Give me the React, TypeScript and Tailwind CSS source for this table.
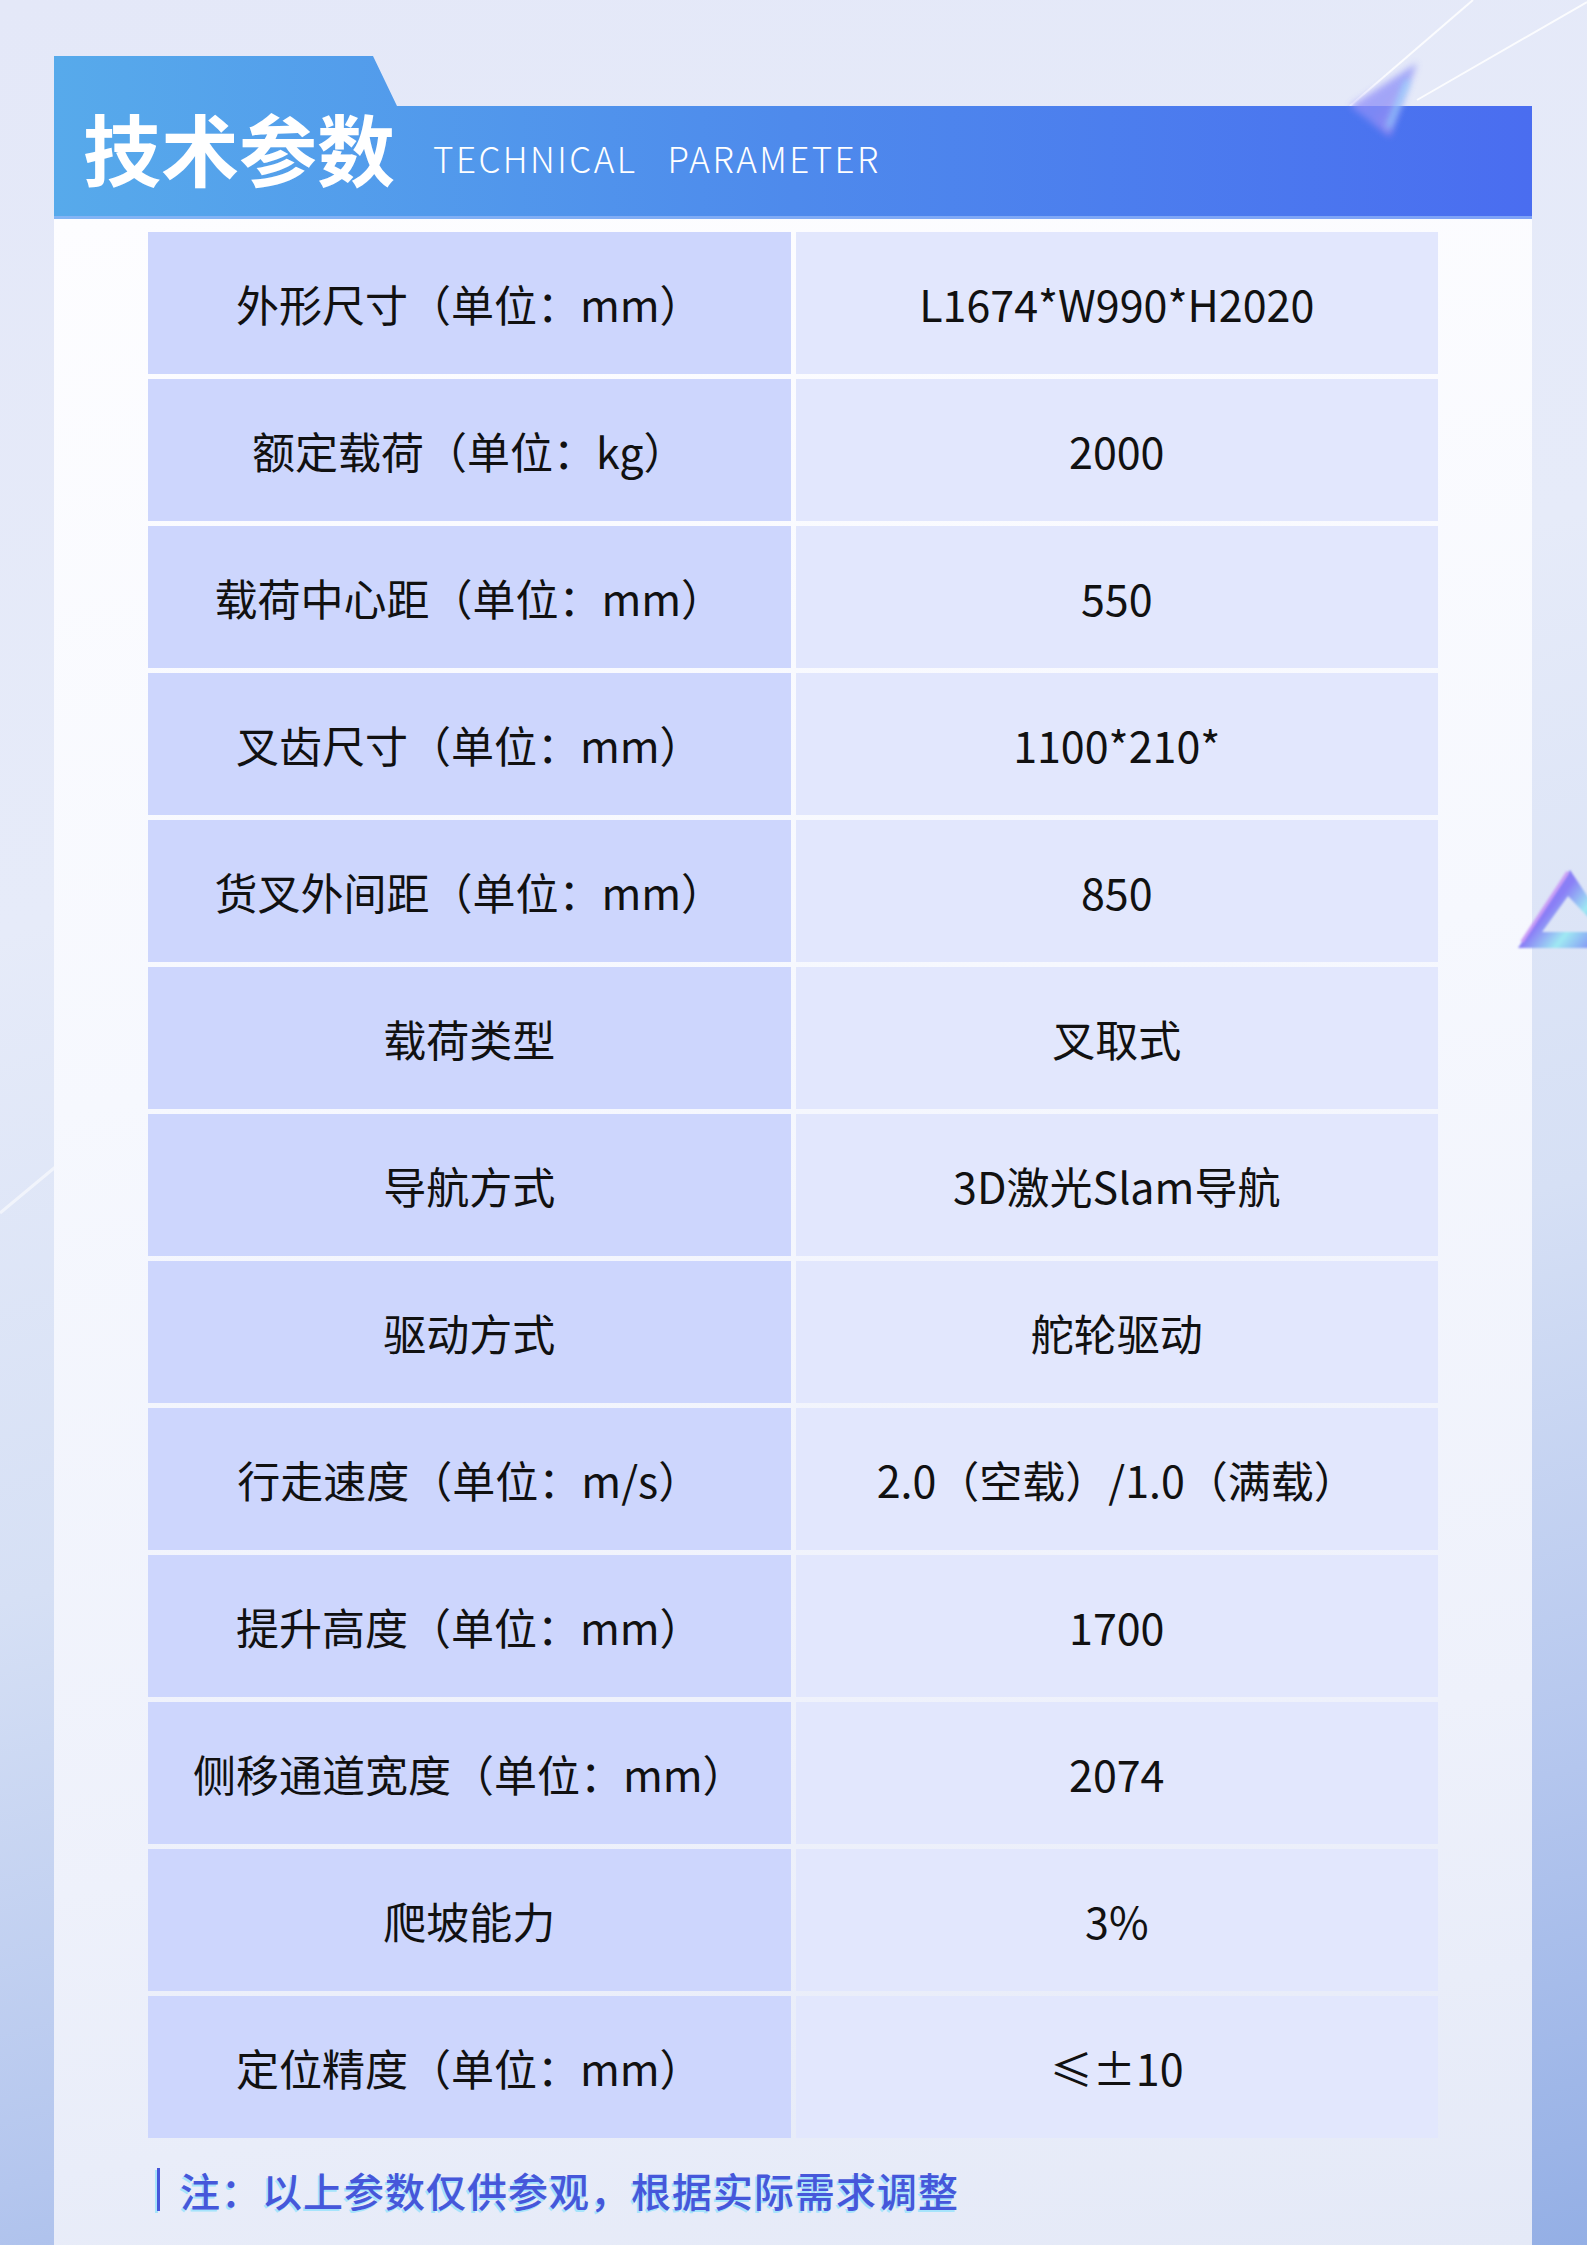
import React from "react";

const rows: [string, string][] = [
  ["外形尺寸（单位：mm）", "L1674*W990*H2020"],
  ["额定载荷（单位：kg）", "2000"],
  ["载荷中心距（单位：mm）", "550"],
  ["叉齿尺寸（单位：mm）", "1100*210*"],
  ["货叉外间距（单位：mm）", "850"],
  ["载荷类型", "叉取式"],
  ["导航方式", "3D激光Slam导航"],
  ["驱动方式", "舵轮驱动"],
  ["行走速度（单位：m/s）", "2.0（空载）/1.0（满载）"],
  ["提升高度（单位：mm）", "1700"],
  ["侧移通道宽度（单位：mm）", "2074"],
  ["爬坡能力", "3%"],
  ["定位精度（单位：mm）", "≤±10"],
];

function CornerLines() {
  return (
    <svg
      className="absolute right-0 top-0 w-[307px] h-[180px] pointer-events-none"
      viewBox="0 0 307 180"
    >
      <line x1="193" y1="0" x2="70" y2="106" stroke="white" strokeOpacity="0.85" strokeWidth="2" />
      <line x1="307" y1="2" x2="137" y2="100" stroke="white" strokeOpacity="0.85" strokeWidth="2" />
    </svg>
  );
}

function Prism() {
  return (
    <svg
      className="absolute right-0 top-0 w-[307px] h-[180px] pointer-events-none"
      viewBox="0 0 307 180"
    >
      <defs>
        <filter id="pblur" x="-50%" y="-50%" width="200%" height="200%">
          <feGaussianBlur stdDeviation="3.5" />
        </filter>
        <linearGradient id="pgrad" x1="0" y1="0" x2="1" y2="1">
          <stop offset="0" stopColor="#a58afb" />
          <stop offset="0.5" stopColor="#8a8ff7" />
          <stop offset="1" stopColor="#c08ef0" />
        </linearGradient>
      </defs>
      <polygon points="137,63 70,106 110,137" fill="url(#pgrad)" opacity="0.75" filter="url(#pblur)" />
      <line x1="128" y1="80" x2="108" y2="128" stroke="#8fe6ff" strokeWidth="4" opacity="0.85" filter="url(#pblur)" />
    </svg>
  );
}

function SideTriangle() {
  return (
    <svg
      className="absolute right-0 top-[860px] w-[77px] h-[100px] pointer-events-none"
      viewBox="0 0 77 100"
    >
      <defs>
        <filter id="tblur" x="-30%" y="-30%" width="160%" height="160%">
          <feGaussianBlur stdDeviation="1.3" />
        </filter>
        <linearGradient id="tgrad" x1="0" y1="0" x2="1" y2="0.6">
          <stop offset="0" stopColor="#7c84f5" />
          <stop offset="0.45" stopColor="#8a7ff6" />
          <stop offset="0.7" stopColor="#9fe9f3" />
          <stop offset="1" stopColor="#7f86f5" />
        </linearGradient>
      </defs>
      <path
        d="M60 10 L8 88 L112 88 Z M58 36 L32 72 L92 72 Z"
        fillRule="evenodd"
        fill="url(#tgrad)"
        filter="url(#tblur)"
      />
      <path d="M58 12 L12 82" stroke="#c98ff6" strokeWidth="4" opacity="0.7" filter="url(#tblur)" />
    </svg>
  );
}

function LeftGlint() {
  return (
    <svg
      className="absolute left-0 top-[1060px] w-[200px] h-[170px] pointer-events-none"
      viewBox="0 0 200 170"
    >
      <line x1="0" y1="153" x2="160" y2="20" stroke="white" strokeOpacity="0.55" strokeWidth="3" />
    </svg>
  );
}

export default function App() {
  return (
    <div className="relative w-full min-h-[2245px] overflow-hidden bg-[linear-gradient(165deg,#e4e8f8_0%,#e6ebf9_35%,#d6e0f5_60%,#b4c6ee_82%,#94afe5_100%)] font-['Noto_Sans_CJK_SC',sans-serif]">
      <CornerLines />
      <LeftGlint />

      <div className="relative flex flex-col min-h-[2245px] pt-[56px] pl-[54px] pr-[55px]">
        {/* heading tab + bar */}
        <header className="h-[163px] flex items-baseline pl-[29px] pt-[52px] bg-gradient-to-r from-[#57aaeb] via-[#4e8aec] to-[#4a6df0] shadow-[inset_0_-3px_0_rgba(150,185,250,0.7)] [clip-path:polygon(0_0,319px_0,343px_50px,100%_50px,100%_100%,0_100%)]">
          <h1 className="text-[78px] leading-none font-bold text-white">技术参数</h1>
          <span className="ml-[38px] -translate-y-[8px] text-[35px] leading-none font-light tracking-[0.07em] text-white">
            TECHNICAL<span className="ml-[30px]">PARAMETER</span>
          </span>
        </header>

        {/* table panel */}
        <section className="flex-1 pt-[13px] pl-[94px] bg-[linear-gradient(172deg,#fdfdff_0%,#f6f8fe_40%,#eef1fb_75%,#e4e9f7_100%)]">
          <div className="grid grid-cols-2 w-[1290px] gap-[5px]">
            {rows.map(([label, value]) => (
              <React.Fragment key={label}>
                <div className="h-[142px] flex items-center justify-center bg-[#cdd6fd] text-[43px] text-[#111]">
                  {label}
                </div>
                <div className="h-[142px] flex items-center justify-center bg-[#e2e7fd] text-[43px] text-[#111]">
                  {value}
                </div>
              </React.Fragment>
            ))}
          </div>

          <div className="mt-[30px] ml-[9px] flex items-center gap-[20px] text-[#4657da]">
            <div className="w-[3px] h-[43px] bg-[#4657da] shadow-[-2px_2px_0_#a6e4fb]" />
            <p className="text-[40px] leading-none font-medium tracking-[1px] [text-shadow:-2px_2px_0_#a6e4fb]">
              注：以上参数仅供参观，根据实际需求调整
            </p>
          </div>
        </section>
      </div>

      <SideTriangle />
      <Prism />
    </div>
  );
}
